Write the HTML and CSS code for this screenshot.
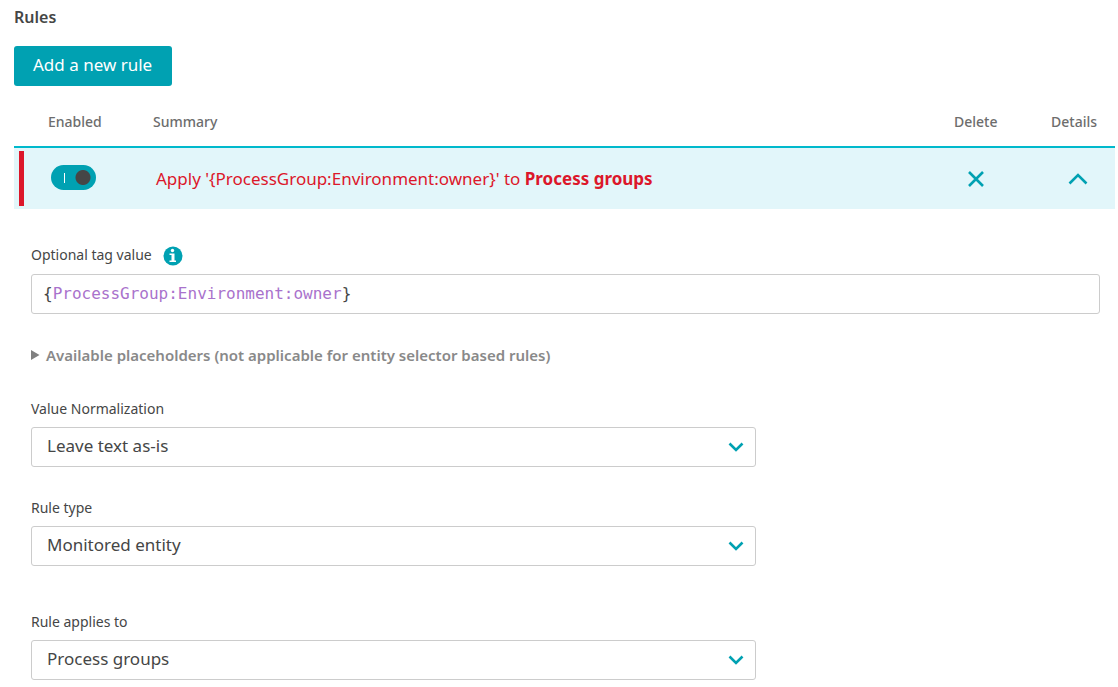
FILE: index.html
```html
<!DOCTYPE html>
<html lang="en">
<head>
<meta charset="utf-8">
<title>Rules</title>
<link rel="stylesheet" href="styles.css">
</head>
<body>
<main class="page">
  <h1 class="title">Rules</h1>
  <button class="add-button" type="button">Add a new rule</button>

  <table class="rules">
    <thead>
      <tr>
        <th class="col-enabled" scope="col">Enabled</th>
        <th class="col-summary" scope="col">Summary</th>
        <th class="col-delete" scope="col">Delete</th>
        <th class="col-details" scope="col">Details</th>
      </tr>
    </thead>
    <tbody>
      <tr>
        <td class="col-enabled"><input class="toggle" type="checkbox" aria-label="Enabled" checked></td>
        <td class="col-summary summary">Apply '{ProcessGroup:Environment:owner}' to <strong>Process groups</strong></td>
        <td class="col-delete">
          <button class="icon-button" type="button" aria-label="Delete rule">
            <svg width="18" height="18" viewBox="0 0 18 18"><path d="M2 2 16 16M16 2 2 16"/></svg>
          </button>
        </td>
        <td class="col-details">
          <button class="icon-button" type="button" aria-label="Collapse details">
            <svg width="20" height="18" viewBox="0 0 20 18"><path d="M1.500 13.500 10 5 18.500 13.500"/></svg>
          </button>
        </td>
      </tr>
    </tbody>
  </table>

  <form class="details">
    <div class="field field-wide">
      <div class="label-row">
        <label class="label" for="tag-value">Optional tag value</label>
        <svg class="info" width="20" height="20" viewBox="0 0 20 20" role="img" aria-label="Information">
          <circle cx="10" cy="10" r="9.500" fill="#00a1b2"/>
          <circle cx="9.500" cy="4.500" r="1.700" fill="#fff"/>
          <path d="M6.500 7.500H11.500V14.500H13V16H6.500V14.500H8.500V9H6.500Z" fill="#fff"/>
        </svg>
      </div>
      <div class="code-box"><span>{</span><input class="code-input" id="tag-value" type="text" value="ProcessGroup:Environment:owner" spellcheck="false"><span>}</span></div>
    </div>

    <button class="placeholders" type="button" aria-expanded="false">
      <svg width="9" height="10" viewBox="0 0 9 10"><path d="M0 0 8.500 5 0 10Z"/></svg>
      Available placeholders (not applicable for entity selector based rules)
    </button>

    <div class="field">
      <label class="label" for="normalization">Value Normalization</label>
      <div class="select-box">
        <select class="select" id="normalization"><option>Leave text as-is</option></select>
        <svg class="chevron" width="16" height="10" viewBox="0 0 16 10"><path d="M1.500 1.500 8 8 14.500 1.500"/></svg>
      </div>
    </div>

    <div class="field field-type">
      <label class="label" for="rule-type">Rule type</label>
      <div class="select-box">
        <select class="select" id="rule-type"><option>Monitored entity</option></select>
        <svg class="chevron" width="16" height="10" viewBox="0 0 16 10"><path d="M1.500 1.500 8 8 14.500 1.500"/></svg>
      </div>
    </div>

    <div class="field">
      <label class="label" for="applies-to">Rule applies to</label>
      <div class="select-box">
        <select class="select" id="applies-to"><option>Process groups</option></select>
        <svg class="chevron" width="16" height="10" viewBox="0 0 16 10"><path d="M1.500 1.500 8 8 14.500 1.500"/></svg>
      </div>
    </div>
  </form>
</main>
</body>
</html>
```
FILE: styles.css
```css
* {
  box-sizing: border-box;
}

body {
  margin: 0;
  background: #fff;
  color: #454646;
  font-family: "Noto Sans", "Open Sans", sans-serif;
  font-size: 14px;
  line-height: 20px;
}

button,
input,
select {
  font: inherit;
}

svg {
  display: block;
  flex: none;
}

.page {
  padding: 7px 3px 7px 14px;
}

.title {
  margin: 0 0 19px;
  font-size: 16px;
  font-weight: 600;
  line-height: 20px;
}

.add-button {
  display: block;
  height: 40px;
  padding: 0 20px 2px 19px;
  border: 0;
  border-radius: 3px;
  background: #00a1b2;
  color: #fff;
  font-size: 17px;
}

.rules {
  width: 100%;
  margin-top: 18px;
  border-collapse: collapse;
}

.rules th {
  height: 43px;
  padding: 0 0 7px;
  color: #6d6d6d;
  font-weight: 500;
  text-align: left;
}

.rules thead tr {
  border-bottom: 2px solid #00b9cc;
}

.rules td {
  height: 62px;
  padding: 0;
  background: #e2f6fa;
}

.rules .col-enabled {
  width: 139px;
  padding-left: 34px;
}

.rules td.col-enabled {
  padding: 0 0 2px 37px;
  background: linear-gradient(#dc172a, #dc172a) 5px 50% / 5px 55px no-repeat #e2f6fa;
}

.rules .col-delete {
  width: 97px;
}

.rules .col-details {
  width: 64px;
}

.rules .summary {
  padding-left: 3px;
  color: #dc172a;
  font-size: 17px;
}

.rules td.col-delete {
  padding-left: 13px;
}

.rules td.col-details {
  padding-left: 17px;
}

.toggle {
  display: block;
  width: 45px;
  height: 25px;
  margin: 0;
  border-radius: 13px;
  appearance: none;
  background:
    linear-gradient(#fff, #fff) 13px 50% / 1px 10px no-repeat,
    radial-gradient(circle at 32px 50%, #454646 7px, #00a1b2 8px);
}

.icon-button {
  display: block;
  padding: 0;
  border: 0;
  background: none;
}

.icon-button path,
.chevron path {
  fill: none;
  stroke: #00a1b2;
  stroke-width: 2.6;
}

.details {
  padding: 36px 15px 0 17px;
}

.field {
  display: flex;
  flex-direction: column;
  gap: 8px;
  max-width: 725px;
  margin-bottom: 31px;
}

.field-wide {
  gap: 9px;
  max-width: none;
}

.field-type {
  margin-bottom: 46px;
}

.label-row {
  display: flex;
  align-items: center;
  gap: 11px;
}

.info {
  margin-bottom: -2px;
}

.code-box {
  display: flex;
  align-items: center;
  height: 40px;
  padding: 0 11px;
  border: 1px solid #ccc;
  border-radius: 3px;
  font-family: "DejaVu Sans Mono", monospace;
  font-size: 16px;
}

.code-input {
  width: 30ch;
  padding: 0;
  border: 0;
  outline: 0;
  background: none;
  color: #a972cc;
}

.placeholders {
  display: flex;
  align-items: center;
  gap: 6px;
  margin-bottom: 34px;
  padding: 0;
  border: 0;
  background: none;
  color: #898989;
  font-size: 15px;
  font-weight: 600;
}

.placeholders path {
  fill: #808080;
}

.select-box {
  position: relative;
}

.select {
  display: block;
  width: 100%;
  height: 40px;
  padding: 0 40px 2px 15px;
  border: 1px solid #ccc;
  border-radius: 3px;
  appearance: none;
  background: #fff;
  color: #454646;
  font-size: 17px;
}

.chevron {
  position: absolute;
  top: 15px;
  right: 12px;
  pointer-events: none;
}
```
